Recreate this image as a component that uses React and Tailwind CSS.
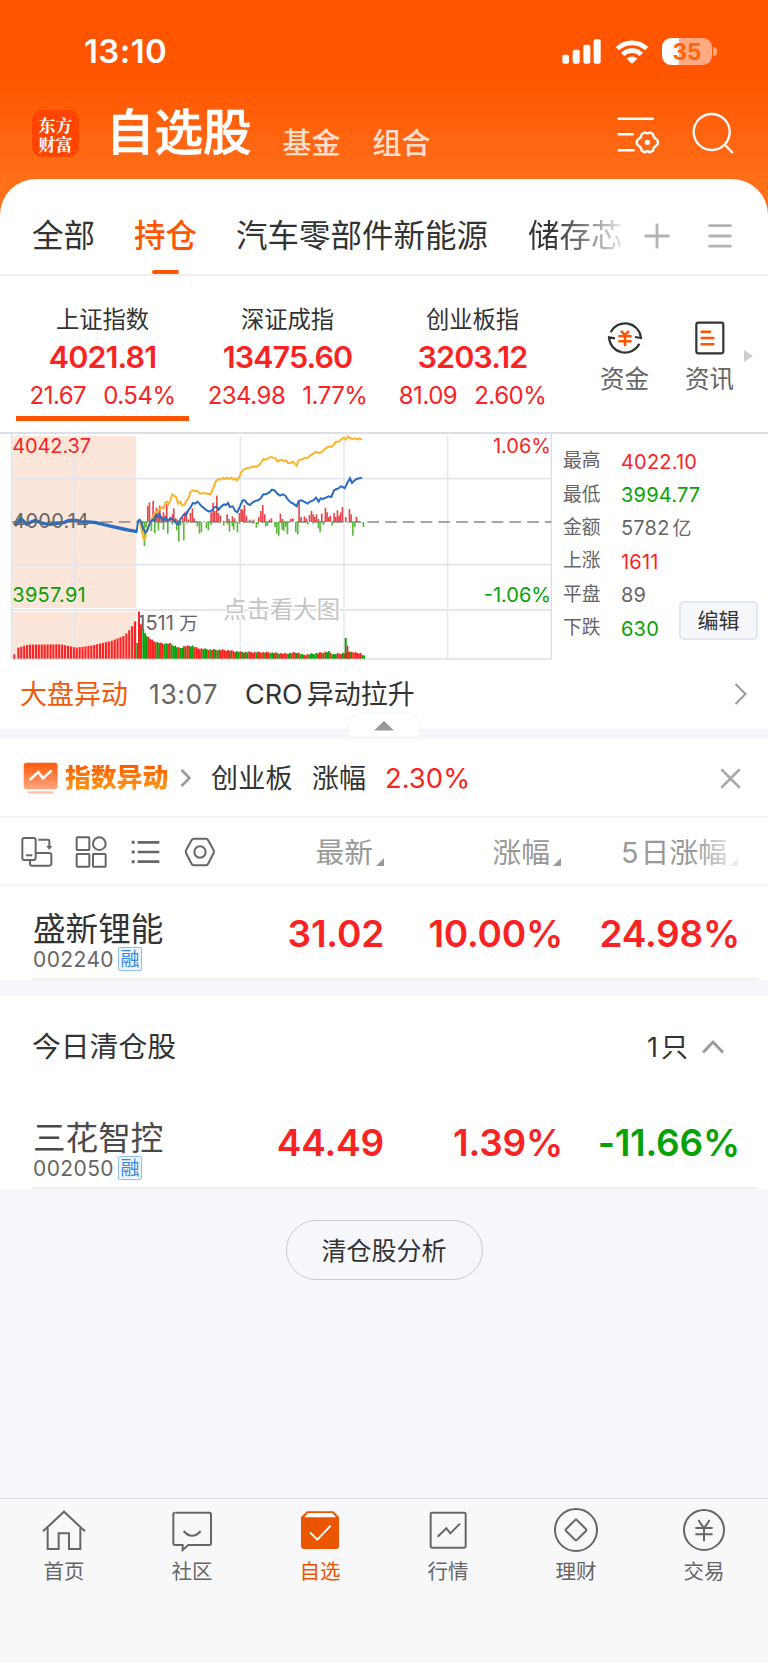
import React from 'react';

const indices = [
  { name: '上证指数', value: '4021.81', change: '21.67', percent: '0.54%', active: true },
  { name: '深证成指', value: '13475.60', change: '234.98', percent: '1.77%' },
  { name: '创业板指', value: '3203.12', change: '81.09', percent: '2.60%' },
];

const marketStats = [
  { label: '最高', value: '4022.10', color: 'text-[#fa2323]' },
  { label: '最低', value: '3994.77', color: 'text-[#06a206]' },
  { label: '金额', value: '5782', unit: '亿', color: 'text-[#666]' },
  { label: '上涨', value: '1611', color: 'text-[#fa2323]' },
  { label: '平盘', value: '89', color: 'text-[#666]' },
  { label: '下跌', value: '630', color: 'text-[#06a206]' },
];

// [x, top] outline of the volume area, filled in between
const volumeOutline = [
  [40, 688], [46, 688], [52, 668], [80, 659], [180, 658], [225, 668], [270, 662], [330, 648], [370, 632], [388, 612], [404, 586],
];
const volumeOutline2 = [
  [426, 612], [434, 628], [444, 638], [456, 648], [480, 655], [508, 656], [524, 664], [536, 670], [550, 664], [574, 662], [590, 670],
  [630, 674], [670, 675], [720, 681], [800, 682], [850, 686], [890, 682], [905, 690], [940, 686], [984, 680], [996, 688], [1030, 684],
  [1046, 678], [1056, 683], [1078, 684], [1090, 694],
];

const topAt = (outline, x) => {
  for (let i = 1; i < outline.length; i++) {
    const [x0, y0] = outline[i - 1];
    const [x1, y1] = outline[i];
    if (x <= x1) return y0 + ((y1 - y0) * (x - x0)) / (x1 - x0);
  }
  return outline[outline.length - 1][1];
};

const openingBars = [];
for (let x = 52; x <= 402; x += 8.75) openingBars.push([x, topAt(volumeOutline, x)]);

const volumeColors = 'GGGRRRRRGGRRGGRRGGGGRGGRGRRGGRRRRRGGGRGRGGRGRRRRRGRRRGGRGRGGRRRRGRRRRGRRGGRRGGRRRRGGRRRGRGGRRRGGGGGRRRGRGGRGGGRRRGRRRGRRRRRR';
const volumeBars = [];
for (let i = 0; i < 126; i++) {
  const x = 427 + i * 5.3;
  const wobble = ((i * 7) % 5) - 2;
  volumeBars.push([x, topAt(volumeOutline2, x) + wobble, volumeColors[i % volumeColors.length]]);
}

const upBars = [
  [443, 243], [448, 232], [459, 228], [464, 268], [469, 248], [474, 262], [479, 242], [485, 274], [490, 262], [495, 272], [500, 238],
  [511, 276], [517, 268], [521, 250], [527, 280], [532, 284], [548, 278], [554, 262], [559, 258], [565, 284], [571, 264], [577, 250],
  [582, 280], [588, 288], [612, 289], [633, 262], [639, 234], [644, 258], [650, 212], [655, 264], [661, 272], [671, 288], [681, 268],
  [687, 282], [697, 274], [703, 280], [718, 264], [723, 252], [728, 254], [733, 240], [739, 272], [749, 284], [760, 284], [776, 276],
  [782, 258], [788, 240], [794, 268], [808, 284], [814, 280], [841, 266], [847, 282], [872, 282], [878, 280], [897, 230], [903, 276],
  [913, 274], [918, 280], [928, 270], [934, 258], [939, 268], [944, 276], [949, 268], [955, 282], [965, 266], [976, 248], [981, 262],
  [986, 276], [991, 272], [1002, 264], [1007, 276], [1012, 256], [1017, 272], [1022, 262], [1027, 246], [1037, 276], [1048, 252],
  [1053, 268], [1069, 276], [1075, 288],
];
const downBars = [
  [422, 306], [427, 326], [433, 363], [438, 308], [454, 318], [464, 324], [475, 316], [490, 314], [503, 326], [516, 298], [530, 316],
  [536, 350], [541, 302], [551, 346], [562, 296], [592, 304], [598, 326], [604, 322], [619, 310], [625, 316], [633, 300], [660, 294],
  [671, 302], [684, 298], [688, 320], [697, 304], [701, 314], [712, 322], [718, 296], [759, 296], [769, 308], [774, 298], [797, 304],
  [802, 302], [825, 306], [830, 326], [836, 332], [846, 314], [851, 318], [857, 306], [862, 328], [887, 322], [893, 328], [923, 298],
  [939, 296], [955, 310], [960, 322], [970, 300], [996, 302], [1043, 294], [1058, 332], [1064, 306], [1090, 306],
];

const yellowLine =
  '414,290 420,296 425,314 430,340 435,342 440,318 445,304 452,290 458,276 464,266 470,262 478,252 484,248 491,250 496,232 501,230 505,238 511,226 517,208 522,212 528,216 534,236 540,230 547,242 553,240 559,228 566,218 572,200 578,196 585,198 592,198 600,206 612,204 622,206 632,208 640,188 647,170 655,162 663,164 670,158 676,162 682,158 688,162 694,158 700,164 705,160 711,166 718,156 724,142 730,134 738,130 748,128 756,126 762,124 768,126 776,122 784,112 790,102 796,104 802,102 808,98 814,96 820,98 827,100 833,110 838,106 844,104 850,108 858,106 864,114 872,114 878,110 884,116 890,122 896,106 902,104 908,102 916,98 924,98 932,90 940,86 948,80 956,84 964,82 972,74 980,68 988,64 994,66 1000,60 1008,50 1016,50 1024,42 1032,38 1038,44 1044,34 1050,40 1058,42 1066,40 1072,44 1078,40 1086,44';
const blueLine =
  '410,320 414,288 419,284 424,292 430,312 436,322 442,316 447,302 452,290 458,284 463,286 468,270 474,276 479,268 484,280 490,286 497,278 504,288 510,280 516,282 523,286 530,296 535,298 540,284 546,276 552,268 558,270 565,256 572,246 579,234 586,236 592,230 598,236 605,244 612,250 620,256 628,260 636,256 642,248 650,244 656,254 664,244 672,238 678,240 684,234 690,246 698,244 706,258 712,262 720,244 728,226 734,226 742,236 750,240 758,232 766,228 774,226 782,220 790,208 798,208 808,202 816,194 824,196 832,206 840,212 848,208 856,212 864,224 872,232 880,236 890,244 896,228 904,226 912,230 922,236 930,230 940,226 948,218 956,230 962,220 970,222 978,218 986,214 994,216 1002,196 1010,192 1016,190 1022,184 1028,186 1034,190 1042,174 1050,160 1056,174 1064,166 1070,162 1078,160 1086,158';

const SignalIcon = () => (
  <svg className="w-[39px] h-[25px]" viewBox="0 0 117 75" fill="#fff">
    <rect x="1" y="47" width="20" height="27" rx="6" />
    <rect x="32" y="32" width="21" height="42" rx="6" />
    <rect x="64" y="17" width="21" height="57" rx="6" />
    <rect x="95" y="1" width="21" height="73" rx="6" />
  </svg>
);

const WifiIcon = () => (
  <svg className="w-[34px] h-[25px]" viewBox="0 0 102 75" fill="none">
    <path d="M7 29 A64 64 0 0 1 95 29" stroke="#fff" strokeWidth="14" />
    <path d="M23 46 A41 41 0 0 1 79 46" stroke="#fff" strokeWidth="14" />
    <path d="M35 59 A23 23 0 0 1 67 59 L51 74 Z" fill="#fff" />
  </svg>
);

const Battery = () => (
  <div className="flex items-center">
    <div className="flex h-[27px] w-[50px] items-center justify-center rounded-[9px] bg-linear-to-r from-white from-[35%] to-[#ffaa80] to-[35%] pt-px text-[22.5px] leading-[26px] font-bold text-[#ff640a]">
      35
    </div>
    <div className="ml-px h-[9px] w-[4px] rounded-r-full bg-[#ffaa80]"></div>
  </div>
);

const FilterIcon = () => (
  <svg className="w-[43px] h-[40px]" viewBox="0 0 129 120" fill="none" stroke="#fff" strokeWidth="7.5">
    <path d="M2 14H110M2 61H50M2 109H53" />
    <path
      strokeWidth="7"
      strokeLinejoin="round"
      d="M84 55 Q91 61 98 55 L108 60 Q108 70 117 75 Q125 80 122 85 Q125 90 117 95 Q108 100 108 110 L98 115 Q91 109 84 115 L74 110 Q74 100 65 95 Q57 90 60 85 Q57 80 65 75 Q74 70 74 60 Z"
    />
    <circle cx="91" cy="85" r="8" fill="#fff" stroke="none" />
  </svg>
);

const SearchIcon = () => (
  <svg className="w-[43px] h-[43px]" viewBox="0 0 129 129" fill="none" stroke="#fff" strokeWidth="7">
    <circle cx="59" cy="60" r="54" />
    <path d="M97 97L123 123" />
  </svg>
);

const StatusAndHeader = () => (
  <>
    <div className="flex h-[102px] items-center pr-[51px] pl-[84px]">
      <span className="text-[33px] leading-none font-semibold tracking-[0.4px] text-white">13:10</span>
      <div className="ml-auto flex items-center">
        <SignalIcon />
        <div className="ml-[14px]"><WifiIcon /></div>
        <div className="ml-[13px]"><Battery /></div>
      </div>
    </div>
    <div className="flex h-[63px] items-center pr-[33px] pl-[32px]">
      <div className="flex h-[47px] w-[47px] shrink-0 items-center justify-center rounded-[10px] bg-[#ff4500] font-['Noto_Serif_CJK_SC','Noto_Sans_CJK_SC',sans-serif] text-[17px] leading-[19px] font-bold text-white">
        <p className="w-[34px] break-all">东方财富</p>
      </div>
      <h1 className="ml-[27px] text-[48.5px] leading-none font-medium text-white [-webkit-text-stroke:0.7px_#fff]">自选股</h1>
      <span className="mt-5 ml-[31px] text-[29px] leading-none font-medium text-[#ffdfcd]">基金</span>
      <span className="mt-5 ml-[32px] text-[29px] leading-none font-medium text-[#ffdfcd]">组合</span>
      <div className="ml-auto flex items-center gap-[32px]">
        <FilterIcon />
        <SearchIcon />
      </div>
    </div>
  </>
);

const GroupTabs = () => (
  <div className="flex h-[97px] items-center border-b-2 border-[#efeff1] pt-[18px] text-[31.5px] leading-none text-[#333]">
    <span className="ml-[32px] w-[63px]">全部</span>
    <div className="relative ml-[39px] w-[63px] font-medium text-[#ff5500]">
      持仓
      <div className="absolute top-[50px] left-[18px] h-[4px] w-[27px] rounded-[2px] bg-[#ff5500]"></div>
    </div>
    <span className="ml-[39px] w-[253px]">汽车零部件新能源</span>
    <span className="ml-[39px] w-[98px] bg-linear-to-r from-[#333] from-[25%] to-white to-[104%] bg-clip-text whitespace-nowrap text-transparent">
      储存芯
    </span>
    <svg className="ml-[18px] h-[26px] w-[26px]" viewBox="0 0 26 26" stroke="#b3b3b3" strokeWidth="2.8">
      <path d="M0.5 13H25.5M13 0.5V25.5" />
    </svg>
    <svg className="ml-[37px] h-[26px] w-[26px]" viewBox="0 0 26 26" stroke="#b3b3b3" strokeWidth="2.8" strokeLinecap="round">
      <path d="M2.5 2.7H23.5M2.5 13H23.5M2.5 23.2H23.5" />
    </svg>
  </div>
);

const FundsIcon = () => (
  <svg className="h-[36px] w-[36px]" viewBox="0 0 108 108" fill="none" stroke="#333" strokeWidth="6.5">
    <path d="M11 37 A48 48 0 0 1 102 54 L84 51" />
    <path d="M97 71 A48 48 0 0 1 6 52 L24 55" />
    <path d="M42 33L54 45L66 33M34 49H74M34 64H74M54 45V79" stroke="#ff5500" strokeWidth="7.5" />
  </svg>
);

const NewsIcon = () => (
  <svg className="h-[36px] w-[30px]" viewBox="0 0 90 108" fill="none" stroke="#333" strokeWidth="6.5">
    <rect x="4" y="8" width="81" height="92" rx="6" />
    <path d="M17 35H48M17 54H58M17 73H58" stroke="#ff5500" strokeWidth="7.5" />
  </svg>
);

const IndexSummary = () => (
  <div className="flex h-[156px] pl-[10px]">
    {indices.map((item) => (
      <div key={item.name} className="relative flex w-[185px] flex-col items-center pt-[30px]">
        <span className="text-[23.3px] leading-[28px] text-[#333]">{item.name}</span>
        <span className="mt-[3px] text-[30.5px] leading-[40px] font-semibold tracking-[-0.9px] text-[#fa2323]">{item.value}</span>
        <div className="mt-[3px] flex gap-[17px] text-[24px] leading-[32px] tracking-[-0.5px] text-[#fa2323]">
          <span>{item.change}</span>
          <span>{item.percent}</span>
        </div>
        {item.active && <div className="absolute top-[140px] left-[6px] h-[5px] w-[173px] bg-[#ff5500]"></div>}
      </div>
    ))}
    <div className="ml-[34px] flex w-[51px] flex-col items-center pt-[44px] text-[24.5px] leading-[30px] text-[#666]">
      <FundsIcon />
      <span className="mt-[8px]">资金</span>
    </div>
    <div className="ml-[34px] flex w-[51px] flex-col items-center pt-[44px] text-[24.5px] leading-[30px] text-[#666]">
      <NewsIcon />
      <span className="mt-[8px]">资讯</span>
    </div>
    <svg className="mt-[74px] ml-[9px] h-[12px] w-[9px]" viewBox="0 0 9 12" fill="#ccc">
      <path d="M0 0L9 6L0 12Z" />
    </svg>
  </div>
);

const IntradayChart = () => (
  <svg className="h-[228px] w-[552px] shrink-0" viewBox="0 27 1656 684">
    <g fill="#fce6da">
      <rect x="38" y="33" width="371" height="516" />
      <rect x="38" y="560" width="371" height="141" />
    </g>
    <g stroke="#e3e6ee" strokeWidth="5" fill="none">
      <path d="M36 161H1656M36 419H1656" />
      <path d="M224 33V549M224 560V701M721 33V549M721 560V701M1032 33V549M1032 560V701M1343 33V549M1343 560V701" strokeWidth="4.5" />
    </g>
    <path d="M34 555H1654M34 702H1656M35 21V703M1654 21V703" stroke="#dcdfe7" strokeWidth="4.5" />
    <path d="M36 291H1654" stroke="#888" strokeWidth="5" strokeDasharray="35 18.3" />
    {upBars.map(([x, y]) => (
      <rect key={x} x={x - 2.2} y={y} width="5" height={291 - y} fill="#e8464a" />
    ))}
    {downBars.map(([x, y]) => (
      <rect key={x} x={x - 2.2} y="291" width="5" height={y - 291} fill="#5cb83c" />
    ))}
    <rect x="40" y="688" width="6" height="13" fill="#fa2323" />
    {openingBars.map(([x, y]) => (
      <rect key={x} x={x} y={y} width="6.4" height={701 - y} fill="#fa2323" />
    ))}
    <rect x="409" y="654" width="6" height="47" fill="#06a206" />
    <rect x="414" y="560" width="6" height="141" fill="#fa2323" />
    <rect x="420" y="598" width="6" height="103" fill="#fa2323" />
    {volumeBars.map(([x, y, c]) => (
      <rect key={x} x={x} y={y} width="5.6" height={701 - y} fill={c === 'G' ? '#06a206' : '#fa2323'} />
    ))}
    <rect x="1034" y="639" width="6" height="62" fill="#06a206" />
    <rect x="1040" y="662" width="5" height="39" fill="#fa2323" />
    <polyline points={yellowLine} fill="none" stroke="#fbb42c" strokeWidth="6" />
    <polyline
      points="44,302 52,296 62,280 70,288 80,298 92,292 106,286 120,292 134,296 150,298 166,296 180,294 194,292 206,286 218,286 230,286 242,290 262,291 284,292 300,296 316,300 334,304 352,308 370,312 390,316 412,320"
      fill="none"
      stroke="#2a6cc0"
      strokeWidth="10"
    />
    <polyline points={blueLine} fill="none" stroke="#2a6cc0" strokeWidth="6" />
    <g className="text-[60px]">
      <text x="37" y="84" fill="#fa2323" textLength="236">4042.37</text>
      <text x="37" y="308" fill="#666" textLength="230">4000.14</text>
      <text x="37" y="532" fill="#06a206" textLength="220">3957.91</text>
      <text x="1653" y="84" fill="#fa2323" textAnchor="end">1.06%</text>
      <text x="1653" y="532" fill="#06a206" textAnchor="end">-1.06%</text>
      <text x="412" y="615" fill="#666">1511</text>
      <text x="538" y="615" fill="#666" className="text-[56px]">万</text>
      <text x="670" y="580" fill="#c4c4c4" stroke="#fff" strokeWidth="6" paintOrder="stroke" className="text-[70px]">点击看大图</text>
    </g>
  </svg>
);

const MarketPanel = () => (
  <div className="flex h-[230px] border-t-2 border-[#dcdfe7]">
    <IntradayChart />
    <div className="relative flex-1 pt-[11px] pl-[11px]">
      {marketStats.map((s) => (
        <div key={s.label} className="flex h-[33.4px] items-center leading-none">
          <span className="w-[58px] text-[18.8px] text-[#666]">{s.label}</span>
          <span className={`text-[20px] tracking-[0.2px] ${s.color}`}>{s.value}</span>
          {s.unit && <span className="ml-[3px] text-[19px] text-[#666]">{s.unit}</span>}
        </div>
      ))}
      <button className="absolute top-[167px] right-[10px] h-[39px] w-[79px] rounded-[5px] border-2 border-[#e3e6ee] bg-[#f6f7fa] text-[21px] leading-none text-[#333]">
        编辑
      </button>
    </div>
  </div>
);

const NewsTicker = () => (
  <div className="relative flex h-[67px] items-center pb-[3px] pl-[20px] text-[27px] leading-none text-[#333]">
    <span className="text-[#f05a0a]">大盘异动</span>
    <span className="ml-[21px] w-[68px] text-[26.5px] tracking-[0.6px] text-[#666]">13:07</span>
    <span className="ml-[28px]">CRO</span>
    <span className="ml-[4px]">异动拉升</span>
    <svg className="mr-[21px] ml-auto h-[24px] w-[13px]" viewBox="0 0 13 24" fill="none" stroke="#999" strokeWidth="2">
      <path d="M1.5 2L11.5 12L1.5 22" />
    </svg>
    {/* collapse handle over the divider band */}
    <svg className="absolute top-[50px] left-[346px] h-[26px] w-[76px]" viewBox="0 0 76 26">
      <path d="M1 25 L3 11 Q5 1 17 1 H59 Q71 1 73 11 L75 25 Z" fill="#fff" stroke="#f2f3f5" strokeWidth="1.2" />
      <path d="M28 18.500L38 9L48 18.500Z" fill="#999" />
    </svg>
  </div>
);

const IndexAlert = () => (
  <div className="flex h-[79px] items-center border-b-2 border-[#f3f4f6] pt-[1px] pl-[23px] text-[27px] leading-none text-[#333]">
    <svg className="h-[33px] w-[36px]" viewBox="0 0 108 99" fill="none">
      <defs>
        <linearGradient id="board" x1="0" y1="0" x2="0" y2="1">
          <stop offset="0" stopColor="#ff5a0a" />
          <stop offset="1" stopColor="#ffa680" />
        </linearGradient>
      </defs>
      <rect x="2" y="2" width="102" height="80" rx="9" fill="url(#board)" />
      <path d="M20 54L46 30L60 49L86 25" stroke="#fff" strokeWidth="7.5" />
      <rect x="15" y="88" width="77" height="7" rx="3" fill="#ffc4a6" />
    </svg>
    <span className="ml-[6px] w-[104px] bg-linear-to-b from-[#ff5a00] to-[#ff9a14] bg-clip-text text-[25.8px] font-black text-transparent">指数异动</span>
    <svg className="ml-[11px] h-[20px] w-[12px]" viewBox="0 0 12 20" fill="none" stroke="#999" strokeWidth="2.5">
      <path d="M1.500 2L9.500 10L1.500 18" />
    </svg>
    <span className="mt-[1px] ml-[19px] tracking-[0.3px]">创业板</span>
    <span className="mt-[1px] ml-[19px]">涨幅</span>
    <span className="mt-[1px] ml-[19px] text-[27.5px]  text-[#fa2323]">2.30%</span>
    <svg className="mr-[27px] ml-auto h-[21px] w-[21px]" viewBox="0 0 21 21" stroke="#aaa" strokeWidth="2.6" strokeLinecap="round">
      <path d="M2 2L19 19M19 2L2 19" />
    </svg>
  </div>
);

const SortMark = () => (
  <svg className="mt-[20px] ml-[3px] h-[8px] w-[8px]" viewBox="0 0 8 8" fill="#999">
    <path d="M8 0V8H0Z" />
  </svg>
);

const TableHeader = () => (
  <div className="flex h-[68px] items-center border-b-2 border-[#f3f4f6] pt-[2px] pl-[20px] text-[28.8px] leading-none text-[#999]">
    <svg className="h-[32px] w-[198px]" viewBox="60 508 594 96" fill="none" stroke="#666" strokeWidth="6">
      <rect x="67" y="514" width="40" height="66" rx="6" />
      <path d="M78 566H97" />
      <path d="M115 519H144Q148 519 148 523V542" />
      <path d="M139 538H157L148 550Z" fill="#666" stroke="none" />
      <path d="M107 559H148Q154 559 154 565V590Q154 597 148 597H96Q90 597 90 591V580" />
      <rect x="230" y="512" width="38" height="38" rx="2" />
      <circle cx="298" cy="531" r="19" />
      <rect x="230" y="562" width="38" height="38" rx="2" />
      <rect x="279" y="562" width="38" height="38" rx="2" />
      <path d="M413 527H478M413 556H478M413 585H478" strokeWidth="8" />
      <path d="M395 527H404M395 556H404M395 585H404" strokeWidth="9" />
      <path d="M581 516H618Q622 516 624 520L641 551Q643 555 641 559L624 592Q622 596 618 596H581Q577 596 575 592L558 559Q556 555 558 551L575 520Q577 516 581 516Z" />
      <circle cx="600" cy="556" r="17" />
    </svg>
    <div className="flex w-[166px] items-center justify-end"><span className="mt-[3px]">最新</span><SortMark /></div>
    <div className="flex w-[177px] items-center justify-end"><span className="mt-[3px]">涨幅</span><SortMark /></div>
    <div className="relative flex w-[177px] items-center justify-end">
      <span className="mt-[3px] mr-[2px]">5</span><span className="mt-[3px]">日涨幅</span><SortMark />
      <div className="absolute inset-y-0 right-0 w-[44px] bg-linear-to-r from-white/0 to-white/85"></div>
    </div>
  </div>
);

const StockRow = ({ name, code, price, percent, fiveDay, fiveDayColor, nameColor }) => (
  <div className="relative flex h-[94px] items-center pl-[33px]">
    <div className="w-[170px] pt-[16px]">
      <div className={`text-[32.6px] leading-[36px] ${nameColor}`}>{name}</div>
      <div className="flex h-[24px] items-center">
        <span className="w-[85px] text-[21px] leading-none tracking-[0.4px] text-[#666]">{code}</span>
        <span className="flex h-[24px] w-[24px] items-center justify-center rounded-[2px] border-[1.5px] border-[#8dbdf5] bg-[#edf5fe] text-[19px] leading-none text-[#3b87e0]">融</span>
      </div>
    </div>
    <span className="w-[181px] text-right text-[37px] leading-none font-semibold tracking-[-0.2px] text-[#fa2323]">{price}</span>
    <span className="w-[179px] text-right text-[37px] leading-none font-semibold tracking-[-0.2px] text-[#fa2323]">{percent}</span>
    <span className={`w-[177px] text-right text-[37px] leading-none font-semibold tracking-[-0.2px] ${fiveDayColor}`}>{fiveDay}</span>
    <div className="absolute right-[10px] bottom-0 left-[32px] h-[2px] bg-[#eef0f2]"></div>
  </div>
);

const navIcons = {
  home: (
    <>
      <path d="M2 69L65 10L128 69" />
      <path d="M16 58V122H49V75H80V122H114V58" />
    </>
  ),
  community: <path d="M15 13H117Q122 13 122 18V105Q122 110 117 110H54L37 125V110H14Q9 110 9 105V18Q9 13 14 13M40 68Q65 97 91 68" />,
  quotes: (
    <>
      <rect x="13" y="13" width="105" height="105" rx="4" />
      <path d="M34 85L60 60L72 75L101 46" />
    </>
  ),
  wealth: (
    <>
      <circle cx="65" cy="65" r="63" />
      <rect x="42" y="42" width="46" height="46" rx="4" transform="rotate(45 65 65)" />
    </>
  ),
  trade: (
    <>
      <circle cx="65" cy="65" r="60" />
      <path d="M48 35L65 60L82 35M39 59H91M39 78H91M65 60V99" />
    </>
  ),
  watchlist: (
    <>
      <path d="M26 9H105L122 26V113Q122 122 113 122H17Q8 122 8 113V26Z" fill="#ec5500" stroke="none" />
      <path d="M29 14H102L113 27H18Z" fill="#fff" stroke="none" />
      <path d="M35 72L57 94L97 52" stroke="#fff" />
    </>
  ),
};

const navItems = [
  { label: '首页', icon: 'home' },
  { label: '社区', icon: 'community' },
  { label: '自选', icon: 'watchlist', active: true },
  { label: '行情', icon: 'quotes' },
  { label: '理财', icon: 'wealth' },
  { label: '交易', icon: 'trade' },
];

const BottomNav = () => (
  <div className="mt-auto grid h-[165px] grid-cols-6 border-t border-[#dcdcde] bg-[#f8f8fb]">
    {navItems.map((item) => (
      <div key={item.label} className={`flex flex-col items-center pt-[9px] text-[20.5px] leading-[26px] ${item.active ? 'text-[#ec5500]' : 'text-[#666]'}`}>
        <svg className="h-[44px] w-[44px]" viewBox="-1 -1 132 132" fill="none" stroke="#666" strokeWidth="6">
          {navIcons[item.icon]}
        </svg>
        <span className="mt-[7px]">{item.label}</span>
      </div>
    ))}
  </div>
);

const App = () => {
  return (
    <div className="flex h-[1663px] w-[768px] flex-col overflow-hidden bg-[#f6f7fa] font-['Inter','Noto_Sans_CJK_SC',sans-serif]">
      <div className="bg-linear-to-b from-[#ff5500] from-[28%] to-[#ff7019] to-[68%]">
        <StatusAndHeader />
        <div className="mt-[14px] rounded-t-[36px] bg-white">
          <GroupTabs />
        </div>
      </div>
      <div className="bg-white">
        <IndexSummary />
        <MarketPanel />
        <NewsTicker />
      </div>
      <div className="mt-[10px] bg-white">
        <IndexAlert />
        <TableHeader />
        <StockRow
          name="盛新锂能" nameColor="text-[#333]" code="002240"
          price="31.02" percent="10.00%" fiveDay="24.98%" fiveDayColor="text-[#fa2323]"
        />
      </div>
      <div className="mt-[16px] bg-white">
        <div className="flex h-[99px] items-center pt-[3px] pr-[43px] pl-[32px] text-[28.8px] leading-none text-[#333]">
          <span>今日清仓股</span>
          <span className="ml-auto text-[27px]">1</span>
          <span className="ml-[3px] text-[27px]">只</span>
          <svg className="ml-[13px] h-[16px] w-[24px]" viewBox="0 0 24 16" fill="none" stroke="#999" strokeWidth="2.8">
            <path d="M2 13.500L12 3L22 13.500" />
          </svg>
        </div>
        <StockRow
          name="三花智控" nameColor="text-[#4a4a4a]" code="002050"
          price="44.49" percent="1.39%" fiveDay="-11.66%" fiveDayColor="text-[#06a206]"
        />
      </div>
      <button className="mx-auto mt-[31px] h-[60px] w-[197px] shrink-0 rounded-full border border-[#c9cacc] pt-[2px] text-[25px] leading-none text-[#333]">
        清仓股分析
      </button>
      <BottomNav />
    </div>
  );
};

export default App;
